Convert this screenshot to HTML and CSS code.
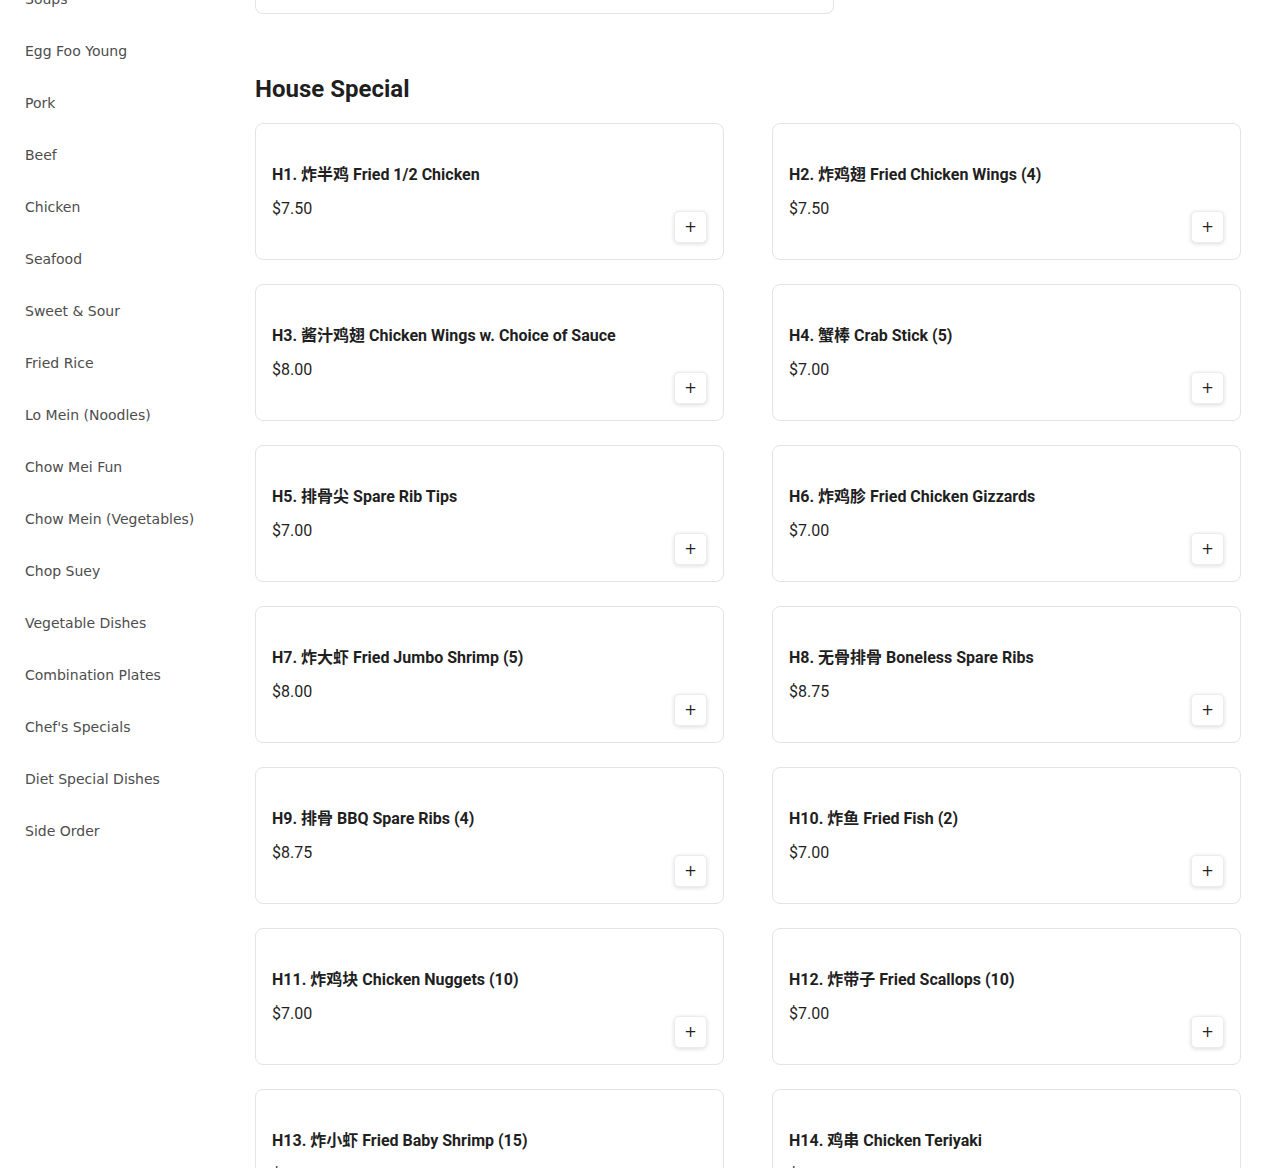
FILE: index.html
```html
<!DOCTYPE HTML>
<html lang=en>
  <head>
    <meta charset=utf-8>
    <title>Menu</title>
    <meta name=viewport content=width=device-width,initial-scale=1>
    <link rel="stylesheet" href="styles.css">
  </head>
  <body>
    <div class=page>
      <nav class=sidebar>
        <a class=cat>Appetizers</a>
        <a class=cat>Soups</a>
        <a class=cat>Egg Foo Young</a>
        <a class=cat>Pork</a>
        <a class=cat>Beef</a>
        <a class=cat>Chicken</a>
        <a class=cat>Seafood</a>
        <a class=cat>Sweet &amp; Sour</a>
        <a class=cat>Fried Rice</a>
        <a class=cat>Lo Mein (Noodles)</a>
        <a class=cat>Chow Mei Fun</a>
        <a class=cat>Chow Mein (Vegetables)</a>
        <a class=cat>Chop Suey</a>
        <a class=cat>Vegetable Dishes</a>
        <a class=cat>Combination Plates</a>
        <a class=cat>Chef's Specials</a>
        <a class=cat>Diet Special Dishes</a>
        <a class=cat>Side Order</a>
      </nav>

      <main class=menu>
        <div class=notice></div>

        <section class=section>
          <h2>House Special</h2>
          <div class=items>
            <div class=item>
              <h3>H1. 炸半鸡 Fried 1/2 Chicken</h3>
              <div class=foot><span class=price>$7.50</span><button class=add>+</button></div>
            </div>
            <div class=item>
              <h3>H2. 炸鸡翅 Fried Chicken Wings (4)</h3>
              <div class=foot><span class=price>$7.50</span><button class=add>+</button></div>
            </div>
            <div class=item>
              <h3>H3. 酱汁鸡翅 Chicken Wings w. Choice of Sauce</h3>
              <div class=foot><span class=price>$8.00</span><button class=add>+</button></div>
            </div>
            <div class=item>
              <h3>H4. 蟹棒 Crab Stick (5)</h3>
              <div class=foot><span class=price>$7.00</span><button class=add>+</button></div>
            </div>
            <div class=item>
              <h3>H5. 排骨尖 Spare Rib Tips</h3>
              <div class=foot><span class=price>$7.00</span><button class=add>+</button></div>
            </div>
            <div class=item>
              <h3>H6. 炸鸡胗 Fried Chicken Gizzards</h3>
              <div class=foot><span class=price>$7.00</span><button class=add>+</button></div>
            </div>
            <div class=item>
              <h3>H7. 炸大虾 Fried Jumbo Shrimp (5)</h3>
              <div class=foot><span class=price>$8.00</span><button class=add>+</button></div>
            </div>
            <div class=item>
              <h3>H8. 无骨排骨 Boneless Spare Ribs</h3>
              <div class=foot><span class=price>$8.75</span><button class=add>+</button></div>
            </div>
            <div class=item>
              <h3>H9. 排骨 BBQ Spare Ribs (4)</h3>
              <div class=foot><span class=price>$8.75</span><button class=add>+</button></div>
            </div>
            <div class=item>
              <h3>H10. 炸鱼 Fried Fish (2)</h3>
              <div class=foot><span class=price>$7.00</span><button class=add>+</button></div>
            </div>
            <div class=item>
              <h3>H11. 炸鸡块 Chicken Nuggets (10)</h3>
              <div class=foot><span class=price>$7.00</span><button class=add>+</button></div>
            </div>
            <div class=item>
              <h3>H12. 炸带子 Fried Scallops (10)</h3>
              <div class=foot><span class=price>$7.00</span><button class=add>+</button></div>
            </div>
            <div class=item>
              <h3>H13. 炸小虾 Fried Baby Shrimp (15)</h3>
              <div class=foot><span class=price>$7.00</span><button class=add>+</button></div>
            </div>
            <div class=item>
              <h3>H14. 鸡串 Chicken Teriyaki</h3>
              <div class=foot><span class=price>$7.00</span><button class=add>+</button></div>
            </div>
          </div>
        </section>
      </main>
    </div>
  </body>
</html>
```

FILE: styles.css
```css
html, body {
  margin: 0;
  background: #fff;
}
.page {
  display: flex;
  align-items: flex-start;
  margin-top: -100px;
}
.sidebar {
  width: 230px;
  flex: none;
  padding-left: 25px;
  padding-top: 21px;
  display: flex;
  flex-direction: column;
}
.cat {
  display: block;
  height: 52px;
  line-height: 52px;
  font-family: "DejaVu Sans", sans-serif;
  font-size: 14px;
  color: #4d4d4d;
  white-space: nowrap;
}
.menu {
  flex: 1;
  min-width: 0;
  padding-right: 29px;
  font-family: Roboto, "Noto Sans CJK SC", sans-serif;
  color: #1f1f1f;
}
.notice {
  width: 577px;
  height: 113px;
  border: 1px solid #e4e4e4;
  border-top: none;
  border-radius: 0 0 8px 8px;
}
.section h2 {
  margin: 59px 0 18px;
  font-size: 24px;
  line-height: 32px;
  font-weight: 700;
}
.items {
  display: grid;
  grid-template-columns: 1fr 1fr;
  column-gap: 48px;
  row-gap: 24px;
}
.item {
  border: 1px solid #e4e4e4;
  border-radius: 8px;
  padding: 39px 16px 16px;
}
.item h3 {
  margin: 0;
  font-size: 16px;
  line-height: 24px;
  font-weight: 700;
  white-space: nowrap;
}
.foot {
  display: flex;
  justify-content: space-between;
  margin-top: 10px;
}
.price {
  align-self: flex-start;
  font-size: 16px;
  line-height: 24px;
}
.add {
  margin-top: 14px;
  width: 33px;
  height: 32px;
  padding: 0;
  background: #fff;
  border: 1px solid #ececec;
  border-radius: 5px;
  box-shadow: 0 1px 4px rgba(0, 0, 0, .14);
  font-family: "DejaVu Sans", sans-serif;
  font-size: 15px;
  line-height: 1;
  color: #222;
}
```
